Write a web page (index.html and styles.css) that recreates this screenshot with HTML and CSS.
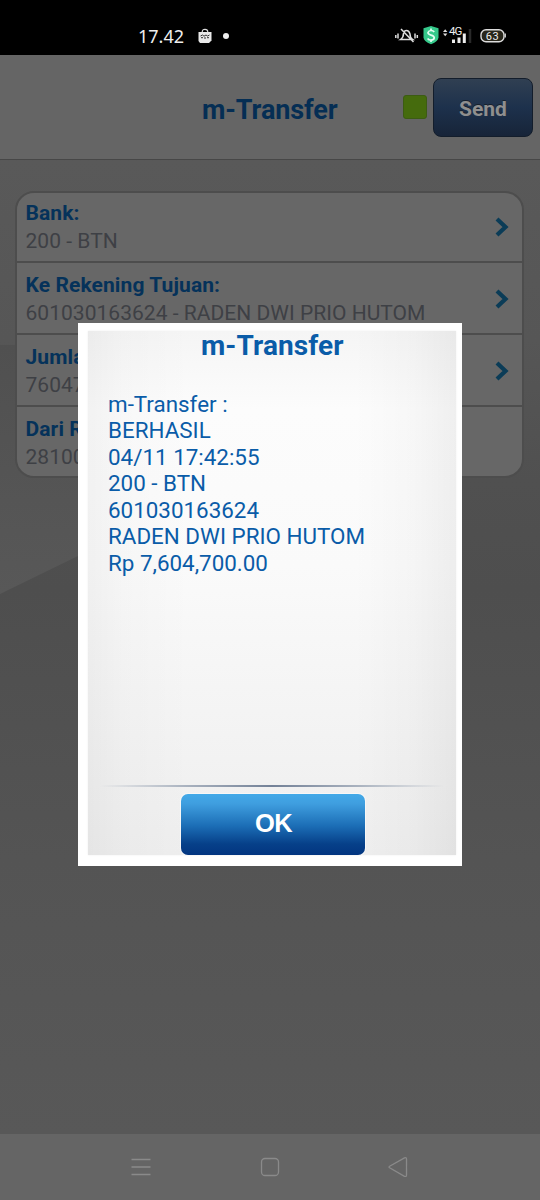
FILE: index.html
```html
<!DOCTYPE html>
<html lang="id">
<head>
<meta charset="utf-8">
<title>m-Transfer</title>
<link rel="stylesheet" href="styles.css">
</head>
<body>
<div class="screen">
  <div class="status">
    <span class="clock">17.42</span>
    <svg class="bag" width="14" height="16" viewBox="0 0 14 16"><path d="M4.300 5V3.500Q4.300 1.300 7 1.300T9.700 3.500V5" fill="none" stroke="#ddd" stroke-width="1.200"/><path d="M.5 4h13v8.500L11 15H2L.5 13z" fill="#e8e8e8"/><path d="M2.500 8l2-1 1.500 1.200L8 7l1.500 1L11.500 7M3 9.700h2M6 10h2M9 9.700h2" stroke="#333" stroke-width="1" fill="none"/></svg>
    <span class="dot"></span>
    <svg class="signals" width="114" height="24" viewBox="0 0 114 24" fill="none">
      <g stroke="#ddd" stroke-width="1.500"><path d="M5.500 15.500q3-2 3-6Q9 6.500 11.500 6.500T15 10q0 4 2.500 5.500zM6 5l12.500 13"/><path d="M.8 11v3M3 9.500v5M20 9.500v5M22.300 11v3"/></g>
      <path d="M36 2l7.500 2.300v9q0 4-7.500 7-7.500-3-7.500-7v-9z" fill="#35c98b"/>
      <path d="M39.200 8q-1-1.500-3.200-1.500t-3 2q0 1.800 3 2.600t3.200 2.600q0 2.300-3.200 2.300-2.300 0-3.400-1.600M36 4.500v2M36 16v2" stroke="#e6fff4" stroke-width="1.700"/>
      <path d="M48 8l2.200-2.800L52.400 8zM48 9.500l2.200 2.800 2.200-2.800z" fill="#ddd"/>
      <text class="net" x="54" y="11">4G</text>
      <path d="M58.500 19v-3.500M64 19v-5.500M69.300 19V9.500" stroke="#eee" stroke-width="3"/>
      <path d="M75 19V5" stroke="#292929" stroke-width="2.500"/>
      <rect x="86" y="5.700" width="23" height="12" rx="5" fill="#28261b" stroke="#ddd" stroke-width="1.400"/><path d="M110.300 9.500v4" stroke="#ddd" stroke-width="1.200"/>
      <text class="charge" x="97.500" y="15.600" text-anchor="middle">63</text>
    </svg>
  </div>
  <header class="header">
    <h1 class="heading">m-Transfer</h1>
    <span class="indicator"></span>
    <button class="send">Send</button>
  </header>
  <main class="content">
    <div class="card">
      <div class="row"><div><div class="label">Bank:</div><div class="value">200 - BTN</div></div><svg class="chevron" viewBox="0 0 14 20"><path d="M2 2l8.500 8L2 18"/></svg></div>
      <div class="row"><div><div class="label">Ke Rekening Tujuan:</div><div class="value">601030163624 - RADEN DWI PRIO HUTOM</div></div><svg class="chevron" viewBox="0 0 14 20"><path d="M2 2l8.500 8L2 18"/></svg></div>
      <div class="row"><div><div class="label">Jumla</div><div class="value">76047</div></div><svg class="chevron" viewBox="0 0 14 20"><path d="M2 2l8.500 8L2 18"/></svg></div>
      <div class="row"><div><div class="label">Dari R</div><div class="value">28100</div></div></div>
    </div>
  </main>
  <nav class="nav">
    <svg width="20" height="20" viewBox="0 0 20 20"><path d="M.5 2.500h19M.5 10h19M.5 17.500h19"/></svg>
    <svg width="20" height="20" viewBox="0 0 20 20"><rect x="1.500" y="1.500" width="17" height="17" rx="3.500"/></svg>
    <svg width="20" height="20" viewBox="0 0 20 20"><path d="M1.600 9.200L16.500.9q2-.8 2 1.200v16q0 2-2 1.200L1.600 10.800q-1.200-.8 0-1.600z"/></svg>
  </nav>
</div>
<section class="dialog">
  <div class="panel">
    <h2 class="dialog-title">m-Transfer</h2>
    <div class="message">m-Transfer :<br>BERHASIL<br>04/11 17:42:55<br>200 - BTN<br>601030163624<br>RADEN DWI PRIO HUTOM<br>Rp 7,604,700.00</div>
    <div class="rule"></div>
    <button class="ok">OK</button>
  </div>
</section>
</body>
</html>
```
FILE: styles.css
```css
* { box-sizing: border-box; }
body { margin: 0; font-family: Roboto, "Liberation Sans", sans-serif; }
button { font-family: inherit; padding: 0; }
h1, h2 { margin: 0; }
.screen { width: 540px; height: 1200px; display: flex; flex-direction: column; overflow: hidden; background: #555; }
.status { height: 55px; flex: none; background: #000; display: flex; align-items: flex-end; padding: 0 30px 7px 138px; }
.status > * { flex: none; }
.clock { font: 18px/24px "Noto Sans", sans-serif; color: #eee; width: 60px; }
.bag { margin: 0 0 4px 0; }
.dot { width: 6px; height: 6px; border-radius: 50%; background: #eee; margin: 0 0 9px 11px; }
.signals { margin-left: 166px; }
.net { font: 11.500px Roboto, sans-serif; fill: #eee; letter-spacing: -1px; }
.charge { font: 11px Roboto, sans-serif; fill: #eee; letter-spacing: .5px; }
.header { height: 105px; flex: none; background: #656565; border-bottom: 1px solid #474747; display: grid; grid-template-columns: 403px 24px 100px; align-items: center; padding-bottom: 2px; }
.heading { font-size: 27px; line-height: 32px; color: #052e54; padding: 7px 0 0 202px; font-weight: 700; white-space: nowrap; letter-spacing: -.1px; }
.indicator { height: 24px; background: #456b0d; border: 1px solid #3c5c13; border-radius: 3px; margin-top: 2px; }
.send { width: 100px; height: 59px; margin: 3px 0 0 6px; border: 1px solid #131d2b; border-radius: 8px; background: linear-gradient(#303f52, #1d314c 50%, #172438); color: #8f8f8f; font-weight: 700; font-size: 21px; padding-top: 2px; text-shadow: 0 -1px #17202c; }
.content { flex: 1; padding: 31px 16px 0 15px; background: linear-gradient(#595959 0, #565656 180px, #505050 320px, #4e4e4e 430px, #545454 700px, #585858 974px); position: relative; }
/* diagonal sheen behind the form */
.content::before { content: ""; position: absolute; left: 0; top: 185px; width: 240px; height: 249px; background: linear-gradient(#505050, #585858); clip-path: polygon(0 0, 100% 0, 100% 53%, 0 100%); }
.card { position: relative; height: 287px; border: 2px solid #4d4d4d; border-radius: 19px; background: #676767; overflow: hidden; }
.row { height: 72px; border-bottom: 2px solid #4d4d4d; padding: 8px 13px 0 8.500px; display: flex; justify-content: space-between; }
.row:first-child { height: 70px; padding-top: 6px; }
.row:last-child { border: 0; }
.label { font-size: 21px; line-height: 28px; font-weight: 700; color: #05325a; white-space: nowrap; letter-spacing: .1px; }
.value { font-size: 21px; line-height: 29px; color: #3e4045; white-space: nowrap; letter-spacing: .03px; }
.chevron { width: 14px; height: 20px; margin-top: 18px; fill: none; stroke: #0b3c57; stroke-width: 4.200; flex: none; }
.nav { height: 66px; flex: none; background: #656565; display: flex; justify-content: space-between; align-items: center; padding: 0 132px 0 131px; }
.nav svg { fill: none; stroke: #8a8a8a; stroke-width: 1.300; }
.dialog { position: absolute; left: 78px; top: 323px; width: 384px; height: 543px; background: #fff; padding: 8px 6px 11px 10px; }
.panel { height: 524px; display: flex; flex-direction: column; align-items: center; background: linear-gradient(90deg, rgba(0,0,0,.04), rgba(0,0,0,.015) 10%, transparent 28% 72%, rgba(0,0,0,.02) 88%, rgba(0,0,0,.05)), linear-gradient(#f5f5f5, #fcfcfc 15%, #fafafa 45%, #eee); box-shadow: 0 0 2px #eee; }
.dialog-title { font-size: 28px; line-height: 30px; height: 60px; color: #0a5ca8; font-weight: 700; align-self: flex-start; margin-left: 113px; letter-spacing: .1px; }
.message { align-self: stretch; padding-left: 20px; height: 394px; font-size: 22.400px; line-height: 26.450px; color: #0a5ca8; white-space: nowrap; }
.rule { width: 344px; height: 2px; flex: none; background: linear-gradient(90deg, transparent, #a9b2bf 25%, #738197 50%, #a9b2bf 75%, transparent); }
.ok { width: 184px; height: 61px; flex: none; margin: 7px 0 0 2px; border: 0; border-radius: 7px; background: linear-gradient(#42a9e8 0, #3f9edf 16%, #1c6eb6 52%, #064089 82%, #023580); color: #fff; font: bold 25.500px/58px "Liberation Sans", Arial, sans-serif; letter-spacing: -.7px; padding: 0 0 3px 1px; box-shadow: 0 0 0 1px #f7f7f7; }
```
